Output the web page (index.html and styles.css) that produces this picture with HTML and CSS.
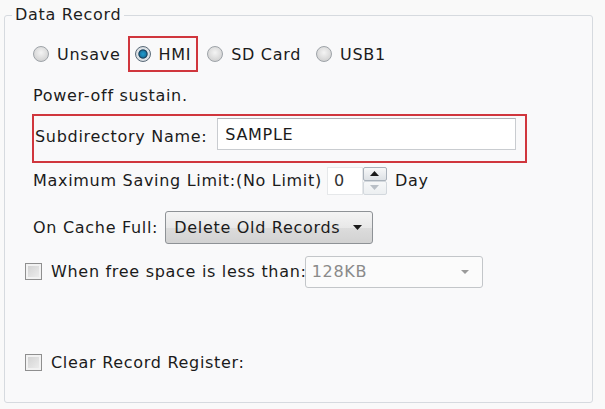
FILE: index.html
```html
<!DOCTYPE html>
<html>
<head>
<meta charset="utf-8">
<link rel="stylesheet" href="styles.css">
</head>
<body>
<fieldset class="group">
  <legend class="legend">Data Record</legend>
  <div class="row radios">
    <label class="opt"><span class="radio"></span><span>Unsave</span></label>
    <label class="opt hilite"><span class="radio on"></span><span>HMI</span></label>
    <label class="opt"><span class="radio"></span><span>SD Card</span></label>
    <label class="opt usb"><span class="radio"></span><span>USB1</span></label>
  </div>
  <div class="row note">Power-off sustain.</div>
  <div class="row subdir">
    <span class="lbl">Subdirectory Name:</span>
    <span class="textbox">SAMPLE</span>
  </div>
  <div class="row maxrow">
    <span>Maximum Saving Limit:(No Limit)</span>
    <span class="spin">
      <span class="spinval">0</span>
      <span class="spinbtns">
        <span class="sbtn up"><svg width="9" height="5" viewBox="0 0 9 5"><path d="M0 5 L4.5 0 L9 5 Z" fill="#1a1a1a"/></svg></span>
        <span class="sbtn down"><svg width="9" height="5" viewBox="0 0 9 5"><path d="M0 0 L4.5 5 L9 0 Z" fill="#b9bfc6"/></svg></span>
      </span>
    </span>
    <span>Day</span>
  </div>
  <div class="row cache">
    <span>On Cache Full:</span>
    <span class="dropbtn">Delete Old Records <svg width="9" height="5" viewBox="0 0 9 5"><path d="M0 0 L4.5 5 L9 0 Z" fill="#1a1a1a"/></svg></span>
  </div>
  <div class="row free">
    <span class="check"></span>
    <span class="freelbl">When free space is less than:</span>
    <span class="combo"><span>128KB</span><svg width="8" height="4" viewBox="0 0 8 4"><path d="M0 0 L4 4 L8 0 Z" fill="#9a9a9a"/></svg></span>
  </div>
  <div class="row clear">
    <span class="check"></span>
    <span>Clear Record Register:</span>
  </div>
</fieldset>
</body>
</html>
```

FILE: styles.css
```css
html, body {
  margin: 0;
  padding: 0;
  background: #f9f9f9;
}
body {
  width: 605px;
  height: 409px;
  overflow: hidden;
  font-family: "DejaVu Sans", "Noto Sans", sans-serif;
  font-size: 16px;
  letter-spacing: 0.7px;
  color: #1b1b1b;
}
.group {
  box-sizing: border-box;
  margin: 4px 0 0 4px;
  width: 589px;
  height: 399px;
  border: 1px solid #d6dadf;
  border-radius: 3px;
  padding: 0 0 0 28px;
  background: #f9f9fa;
  display: flex;
  flex-direction: column;
}
.legend {
  padding: 0 3px;
  margin-left: -21px;
  line-height: 22px;
  color: #1e1e1e;
}
.row {
  display: flex;
  align-items: center;
  white-space: nowrap;
}
.radios {
  margin-top: 9px;
  height: 38px;
}
.opt {
  display: flex;
  align-items: center;
  gap: 8px;
  height: 36px;
  margin-right: 9px;
}
.opt.hilite {
  border: 2px solid #d0363d;
  box-sizing: border-box;
  padding: 0 5px 0 5px;
  margin-left: -2px;
}
.opt.usb { margin-left: 6px; }
.radio {
  width: 16px;
  height: 16px;
  border-radius: 50%;
  border: 1px solid #9ea3a8;
  box-sizing: border-box;
  background: radial-gradient(circle at 50% 40%, #f4f4f4 0, #dcdcdc 55%, #c8c8c8 100%);
}
.radio.on {
  border-color: #5a6a78;
  background: radial-gradient(circle at 50% 50%, #1f9fd0 0, #1a7aa8 30%, #123a55 42%, #dfe4e8 52%, #c9ced3 100%);
}
.note {
  margin-top: 10px;
  height: 24px;
}
.subdir {
  margin-top: 7px;
  margin-left: -1px;
  width: 495px;
  height: 49px;
  box-sizing: border-box;
  border: 2px solid #d0363d;
  align-items: flex-start;
  padding-left: 1px;
}
.subdir .lbl {
  margin-top: 11px;
}
.textbox {
  margin-left: 10px;
  margin-top: 2px;
  width: 299px;
  height: 32px;
  box-sizing: border-box;
  border: 1px solid #c9ccd0;
  border-top-color: #aeb2b7;
  background: #fff;
  padding-left: 7px;
  display: flex;
  align-items: center;
}
.maxrow {
  margin-top: 3px;
  height: 29px;
}
.spin {
  display: flex;
  margin-left: 5px;
  margin-right: 8px;
  height: 28px;
}
.spinval {
  width: 36px;
  box-sizing: border-box;
  background: #fff;
  border: 1px solid #e6e8ea;
  padding-left: 6px;
  display: flex;
  align-items: center;
  color: #333;
}
.spinbtns {
  display: flex;
  flex-direction: column;
  width: 24px;
}
.sbtn {
  flex: 1;
  display: flex;
  align-items: center;
  justify-content: center;
  box-sizing: border-box;
  border: 1px solid #a9b1ba;
  border-radius: 2px;
  background: linear-gradient(#f7f8f9, #dde1e5);
}
.sbtn.down {
  border-color: #d3d8dd;
  background: linear-gradient(#f6f7f8, #eceff1);
}
.cache {
  margin-top: 15px;
  height: 34px;
}
.dropbtn {
  margin-left: 7px;
  height: 33px;
  width: 208px;
  box-sizing: border-box;
  padding: 0 10px 0 8px;
  border: 1px solid #8e9296;
  border-radius: 3px;
  background: linear-gradient(#f4f4f4, #e8e8e8 50%, #dcdcdc 51%, #d2d2d2);
  display: flex;
  align-items: center;
  justify-content: space-between;
}
.free {
  margin-top: 11px;
  height: 33px;
  margin-left: -8px;
}
.check {
  width: 17px;
  height: 17px;
  box-sizing: border-box;
  border: 1px solid #8f8f8f;
  background: linear-gradient(135deg, #cfcfcf, #f0f0f0);
  box-shadow: inset 0 0 0 2px #f2f2f2;
  margin-right: 9px;
  flex: none;
}
.combo {
  margin-left: -2px;
  width: 178px;
  height: 32px;
  box-sizing: border-box;
  border: 1px solid #c3c6c9;
  border-radius: 3px;
  background: #fbfbfb;
  color: #8a8a8a;
  display: flex;
  align-items: center;
  justify-content: space-between;
  padding: 0 13px 0 6px;
}
.clear {
  margin-top: 58px;
  height: 33px;
  margin-left: -8px;
}
```
